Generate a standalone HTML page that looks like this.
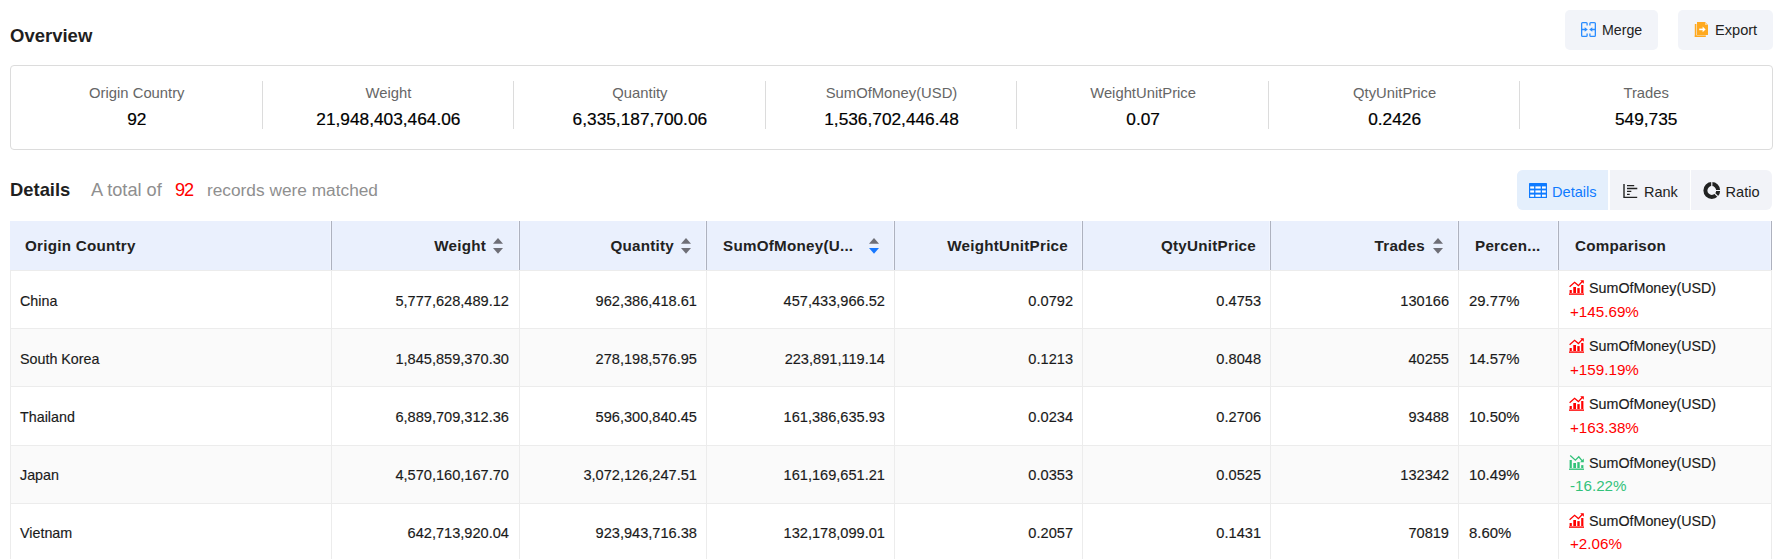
<!DOCTYPE html>
<html><head><meta charset="utf-8"><style>
html,body{margin:0;padding:0;background:#fff;}
body{width:1779px;height:559px;position:relative;overflow:hidden;font-family:"Liberation Sans",sans-serif;}
.t{position:absolute;white-space:nowrap;}
.r{position:absolute;box-sizing:content-box;}
</style></head><body>
<div class="t" style="top:25px;font-size:18.5px;line-height:21px;color:#1f1f1f;font-weight:700;left:10px;">Overview</div>
<div class="r" style="left:1565px;top:10px;width:93px;height:40px;background:#f2f4f9;border-radius:5px;"></div>
<div class="r" style="left:1678px;top:10px;width:95px;height:40px;background:#f2f4f9;border-radius:5px;"></div>
<svg class="r" style="left:1581px;top:22px" width="15" height="15" viewBox="0 0 15 15" fill="none" stroke="#2a8cff" stroke-width="1.3">
<path d="M6.1 3.6V1.6Q6.1 0.65 5.15 0.65H1.6Q0.65 0.65 0.65 1.6V13.4Q0.65 14.35 1.6 14.35H5.15Q6.1 14.35 6.1 13.4V11.4"/>
<path d="M8.9 3.6V1.6Q8.9 0.65 9.85 0.65H13.4Q14.35 0.65 14.35 1.6V13.4Q14.35 14.35 13.4 14.35H9.85Q8.9 14.35 8.9 13.4V11.4"/>
<path d="M0.65 7.5H4.5M14.35 7.5H10.5"/>
<path d="M3.7 5.2L6.8 7.5L3.7 9.8Z M11.3 5.2L8.2 7.5L11.3 9.8Z" fill="#2a8cff" stroke="none"/>
</svg>
<div class="t" style="top:22px;font-size:14.2px;line-height:16px;color:#222;font-weight:400;left:1602px;">Merge</div>
<svg class="r" style="left:1694px;top:21px" width="15" height="17" viewBox="0 0 15 17">
<rect x="0.8" y="3" width="1.6" height="13" fill="#ffa91f"/>
<rect x="0.8" y="14.4" width="11" height="1.6" fill="#ffa91f"/>
<path d="M3 1H11L14 4V14H3Z" fill="#ffa91f"/>
<path d="M11 1V4H14Z" fill="#ffd08a"/>
<rect x="5.2" y="7.6" width="4.5" height="1.6" fill="#fff"/>
<path d="M8.6 5.6L11.6 8.4L8.6 11.2Z" fill="#fff"/>
</svg>
<div class="t" style="top:22px;font-size:14.6px;line-height:16px;color:#222;font-weight:400;left:1715px;">Export</div>
<div class="r" style="left:10px;top:65px;width:1761px;height:83px;border:1px solid #dcdcdc;border-radius:4px;"></div>
<div class="t" style="top:85px;font-size:14.8px;line-height:16px;color:#666;font-weight:400;left:-163.2px;width:600px;text-align:center;">Origin Country</div>
<div class="t" style="top:109px;font-size:17.3px;line-height:20px;color:#000;font-weight:400;left:-163.2px;width:600px;text-align:center;-webkit-text-stroke:0.2px #000;">92</div>
<div class="r" style="left:262px;top:81px;width:1px;height:48px;background:#dcdcdc;"></div>
<div class="t" style="top:85px;font-size:14.8px;line-height:16px;color:#666;font-weight:400;left:88.39999999999998px;width:600px;text-align:center;">Weight</div>
<div class="t" style="top:109px;font-size:17.3px;line-height:20px;color:#000;font-weight:400;left:88.39999999999998px;width:600px;text-align:center;-webkit-text-stroke:0.2px #000;">21,948,403,464.06</div>
<div class="r" style="left:513px;top:81px;width:1px;height:48px;background:#dcdcdc;"></div>
<div class="t" style="top:85px;font-size:14.8px;line-height:16px;color:#666;font-weight:400;left:339.9px;width:600px;text-align:center;">Quantity</div>
<div class="t" style="top:109px;font-size:17.3px;line-height:20px;color:#000;font-weight:400;left:339.9px;width:600px;text-align:center;-webkit-text-stroke:0.2px #000;">6,335,187,700.06</div>
<div class="r" style="left:765px;top:81px;width:1px;height:48px;background:#dcdcdc;"></div>
<div class="t" style="top:85px;font-size:14.8px;line-height:16px;color:#666;font-weight:400;left:591.5px;width:600px;text-align:center;">SumOfMoney(USD)</div>
<div class="t" style="top:109px;font-size:17.3px;line-height:20px;color:#000;font-weight:400;left:591.5px;width:600px;text-align:center;-webkit-text-stroke:0.2px #000;">1,536,702,446.48</div>
<div class="r" style="left:1016px;top:81px;width:1px;height:48px;background:#dcdcdc;"></div>
<div class="t" style="top:85px;font-size:14.8px;line-height:16px;color:#666;font-weight:400;left:843.0999999999999px;width:600px;text-align:center;">WeightUnitPrice</div>
<div class="t" style="top:109px;font-size:17.3px;line-height:20px;color:#000;font-weight:400;left:843.0999999999999px;width:600px;text-align:center;-webkit-text-stroke:0.2px #000;">0.07</div>
<div class="r" style="left:1268px;top:81px;width:1px;height:48px;background:#dcdcdc;"></div>
<div class="t" style="top:85px;font-size:14.8px;line-height:16px;color:#666;font-weight:400;left:1094.6px;width:600px;text-align:center;">QtyUnitPrice</div>
<div class="t" style="top:109px;font-size:17.3px;line-height:20px;color:#000;font-weight:400;left:1094.6px;width:600px;text-align:center;-webkit-text-stroke:0.2px #000;">0.2426</div>
<div class="r" style="left:1519px;top:81px;width:1px;height:48px;background:#dcdcdc;"></div>
<div class="t" style="top:85px;font-size:14.8px;line-height:16px;color:#666;font-weight:400;left:1346.2px;width:600px;text-align:center;">Trades</div>
<div class="t" style="top:109px;font-size:17.3px;line-height:20px;color:#000;font-weight:400;left:1346.2px;width:600px;text-align:center;-webkit-text-stroke:0.2px #000;">549,735</div>
<div class="t" style="top:179px;font-size:18.4px;line-height:21px;color:#1f1f1f;font-weight:700;left:10px;">Details</div>
<div class="t" style="top:180px;font-size:18.2px;line-height:20px;color:#8f8f8f;font-weight:400;left:91px;">A total of</div>
<div class="t" style="top:180px;font-size:18.2px;line-height:20px;color:#f00;font-weight:400;letter-spacing:-1px;left:175px;">92</div>
<div class="t" style="top:180px;font-size:17.3px;line-height:20px;color:#8f8f8f;font-weight:400;left:207px;">records were matched</div>
<div class="r" style="left:1517px;top:170px;width:255px;height:40px;background:#f2f3f8;border-radius:6px;"></div>
<div class="r" style="left:1517px;top:170px;width:91px;height:40px;background:#e4effc;border-radius:6px 0 0 6px;"></div>
<div class="r" style="left:1608px;top:170px;width:2px;height:40px;background:#ffffff;"></div>
<div class="r" style="left:1690px;top:170px;width:1px;height:40px;background:#ffffff;"></div>
<svg class="r" style="left:1529px;top:183px" width="18" height="15" viewBox="0 0 18 15">
<rect x="0" y="0" width="18" height="15" rx="0.6" fill="#0f7bff"/>
<g fill="#fff">
<rect x="1.2" y="3.4" width="3.9" height="2.2"/><rect x="6.4" y="3.4" width="5.3" height="2.2"/><rect x="13" y="3.4" width="3.8" height="2.2"/>
<rect x="1.2" y="7.4" width="3.9" height="2.2"/><rect x="6.4" y="7.4" width="5.3" height="2.2"/><rect x="13" y="7.4" width="3.8" height="2.2"/>
<rect x="1.2" y="11.6" width="3.9" height="2.2"/><rect x="6.4" y="11.6" width="5.3" height="2.2"/><rect x="13" y="11.6" width="3.8" height="2.2"/>
</g></svg>
<div class="t" style="top:184px;font-size:14.6px;line-height:16px;color:#0f7bff;font-weight:400;left:1552px;">Details</div>
<svg class="r" style="left:1623px;top:184px" width="15" height="15" viewBox="0 0 15 15" fill="none" stroke="#222" stroke-width="1.4">
<path d="M1 0V13.4H14.2"/>
<path d="M4 1.6H11.2M4 4.5H14.3M4 7.4H8.3M4 10.4H6.7" stroke-width="1.3"/>
</svg>
<div class="t" style="top:184px;font-size:14.5px;line-height:16px;color:#222;font-weight:400;left:1644px;">Rank</div>
<svg class="r" style="left:1702px;top:181px" width="19" height="19" viewBox="0 0 19 19">
<circle cx="9.8" cy="9.5" r="6.4" fill="none" stroke="#222" stroke-width="4"/>
<path d="M9.8 9.5V0M9.8 9.5H19M9.8 9.5L17 16.7" stroke="#f2f3f8" stroke-width="1.2"/>
</svg>
<div class="t" style="top:184px;font-size:14.6px;line-height:16px;color:#222;font-weight:400;left:1725.5px;">Ratio</div>
<div class="r" style="left:10px;top:221px;width:1762px;height:49px;background:#eaf0fd;"></div>
<div class="r" style="left:330px;top:221px;width:1px;height:49px;background:#f1f5ff;"></div>
<div class="r" style="left:331px;top:221px;width:1px;height:49px;background:#aeb2bf;"></div>
<div class="r" style="left:518px;top:221px;width:1px;height:49px;background:#f1f5ff;"></div>
<div class="r" style="left:519px;top:221px;width:1px;height:49px;background:#aeb2bf;"></div>
<div class="r" style="left:705px;top:221px;width:1px;height:49px;background:#f1f5ff;"></div>
<div class="r" style="left:706px;top:221px;width:1px;height:49px;background:#aeb2bf;"></div>
<div class="r" style="left:893px;top:221px;width:1px;height:49px;background:#f1f5ff;"></div>
<div class="r" style="left:894px;top:221px;width:1px;height:49px;background:#aeb2bf;"></div>
<div class="r" style="left:1081px;top:221px;width:1px;height:49px;background:#f1f5ff;"></div>
<div class="r" style="left:1082px;top:221px;width:1px;height:49px;background:#aeb2bf;"></div>
<div class="r" style="left:1269px;top:221px;width:1px;height:49px;background:#f1f5ff;"></div>
<div class="r" style="left:1270px;top:221px;width:1px;height:49px;background:#aeb2bf;"></div>
<div class="r" style="left:1457px;top:221px;width:1px;height:49px;background:#f1f5ff;"></div>
<div class="r" style="left:1458px;top:221px;width:1px;height:49px;background:#aeb2bf;"></div>
<div class="r" style="left:1557px;top:221px;width:1px;height:49px;background:#f1f5ff;"></div>
<div class="r" style="left:1558px;top:221px;width:1px;height:49px;background:#aeb2bf;"></div>
<div class="r" style="left:1770px;top:221px;width:1px;height:49px;background:#f1f5ff;"></div>
<div class="r" style="left:1771px;top:221px;width:1px;height:49px;background:#aeb2bf;"></div>
<div class="t" style="top:237px;font-size:15.2px;line-height:17px;color:#222;font-weight:700;letter-spacing:0.25px;left:25px;">Origin Country</div>
<div class="t" style="top:237px;font-size:15.2px;line-height:17px;color:#222;font-weight:700;letter-spacing:0.25px;right:1293px;">Weight</div>
<svg class="r" style="left:493px;top:238px" width="10" height="16" viewBox="0 0 10 16">
<path d="M5 0L10 5.7H0Z" fill="#6e6e76"/><path d="M5 15.7L10 10H0Z" fill="#6e6e76"/></svg>
<div class="t" style="top:237px;font-size:15.2px;line-height:17px;color:#222;font-weight:700;letter-spacing:0.25px;right:1105px;">Quantity</div>
<svg class="r" style="left:681px;top:238px" width="10" height="16" viewBox="0 0 10 16">
<path d="M5 0L10 5.7H0Z" fill="#6e6e76"/><path d="M5 15.7L10 10H0Z" fill="#6e6e76"/></svg>
<div class="t" style="top:237px;font-size:15.2px;line-height:17px;color:#222;font-weight:700;letter-spacing:0.25px;left:723px;">SumOfMoney(U...</div>
<svg class="r" style="left:869px;top:238px" width="10" height="16" viewBox="0 0 10 16">
<path d="M5 0L10 5.7H0Z" fill="#6e6e76"/><path d="M5 15.7L10 10H0Z" fill="#1677ff"/></svg>
<div class="t" style="top:237px;font-size:15.2px;line-height:17px;color:#222;font-weight:700;letter-spacing:0.25px;right:711px;">WeightUnitPrice</div>
<div class="t" style="top:237px;font-size:15.2px;line-height:17px;color:#222;font-weight:700;letter-spacing:0.25px;right:523px;">QtyUnitPrice</div>
<div class="t" style="top:237px;font-size:15.2px;line-height:17px;color:#222;font-weight:700;letter-spacing:0.25px;right:354px;">Trades</div>
<svg class="r" style="left:1433px;top:238px" width="10" height="16" viewBox="0 0 10 16">
<path d="M5 0L10 5.7H0Z" fill="#6e6e76"/><path d="M5 15.7L10 10H0Z" fill="#6e6e76"/></svg>
<div class="t" style="top:237px;font-size:15.2px;line-height:17px;color:#222;font-weight:700;letter-spacing:0.25px;left:1475px;">Percen...</div>
<div class="t" style="top:237px;font-size:15.2px;line-height:17px;color:#222;font-weight:700;letter-spacing:0.25px;left:1575px;">Comparison</div>
<div class="r" style="left:10px;top:271px;width:1762px;height:57px;background:#ffffff;"></div>
<div class="r" style="left:10px;top:329px;width:1762px;height:57px;background:#fafafa;"></div>
<div class="r" style="left:10px;top:387px;width:1762px;height:58px;background:#ffffff;"></div>
<div class="r" style="left:10px;top:446px;width:1762px;height:57px;background:#fafafa;"></div>
<div class="r" style="left:10px;top:504px;width:1762px;height:57px;background:#ffffff;"></div>
<div class="r" style="left:10px;top:270px;width:1762px;height:1px;background:#ececec;"></div>
<div class="r" style="left:10px;top:270px;width:1px;height:59px;background:#ececec;"></div>
<div class="r" style="left:331px;top:270px;width:1px;height:59px;background:#ececec;"></div>
<div class="r" style="left:519px;top:270px;width:1px;height:59px;background:#ececec;"></div>
<div class="r" style="left:706px;top:270px;width:1px;height:59px;background:#ececec;"></div>
<div class="r" style="left:894px;top:270px;width:1px;height:59px;background:#ececec;"></div>
<div class="r" style="left:1082px;top:270px;width:1px;height:59px;background:#ececec;"></div>
<div class="r" style="left:1270px;top:270px;width:1px;height:59px;background:#ececec;"></div>
<div class="r" style="left:1458px;top:270px;width:1px;height:59px;background:#ececec;"></div>
<div class="r" style="left:1558px;top:270px;width:1px;height:59px;background:#ececec;"></div>
<div class="r" style="left:1771px;top:270px;width:1px;height:59px;background:#ececec;"></div>
<div class="r" style="left:10px;top:328px;width:1762px;height:1px;background:#ececec;"></div>
<div class="r" style="left:10px;top:328px;width:1px;height:59px;background:#ececec;"></div>
<div class="r" style="left:331px;top:328px;width:1px;height:59px;background:#ececec;"></div>
<div class="r" style="left:519px;top:328px;width:1px;height:59px;background:#ececec;"></div>
<div class="r" style="left:706px;top:328px;width:1px;height:59px;background:#ececec;"></div>
<div class="r" style="left:894px;top:328px;width:1px;height:59px;background:#ececec;"></div>
<div class="r" style="left:1082px;top:328px;width:1px;height:59px;background:#ececec;"></div>
<div class="r" style="left:1270px;top:328px;width:1px;height:59px;background:#ececec;"></div>
<div class="r" style="left:1458px;top:328px;width:1px;height:59px;background:#ececec;"></div>
<div class="r" style="left:1558px;top:328px;width:1px;height:59px;background:#ececec;"></div>
<div class="r" style="left:1771px;top:328px;width:1px;height:59px;background:#ececec;"></div>
<div class="r" style="left:10px;top:386px;width:1762px;height:1px;background:#ececec;"></div>
<div class="r" style="left:10px;top:386px;width:1px;height:60px;background:#ececec;"></div>
<div class="r" style="left:331px;top:386px;width:1px;height:60px;background:#ececec;"></div>
<div class="r" style="left:519px;top:386px;width:1px;height:60px;background:#ececec;"></div>
<div class="r" style="left:706px;top:386px;width:1px;height:60px;background:#ececec;"></div>
<div class="r" style="left:894px;top:386px;width:1px;height:60px;background:#ececec;"></div>
<div class="r" style="left:1082px;top:386px;width:1px;height:60px;background:#ececec;"></div>
<div class="r" style="left:1270px;top:386px;width:1px;height:60px;background:#ececec;"></div>
<div class="r" style="left:1458px;top:386px;width:1px;height:60px;background:#ececec;"></div>
<div class="r" style="left:1558px;top:386px;width:1px;height:60px;background:#ececec;"></div>
<div class="r" style="left:1771px;top:386px;width:1px;height:60px;background:#ececec;"></div>
<div class="r" style="left:10px;top:445px;width:1762px;height:1px;background:#ececec;"></div>
<div class="r" style="left:10px;top:445px;width:1px;height:59px;background:#ececec;"></div>
<div class="r" style="left:331px;top:445px;width:1px;height:59px;background:#ececec;"></div>
<div class="r" style="left:519px;top:445px;width:1px;height:59px;background:#ececec;"></div>
<div class="r" style="left:706px;top:445px;width:1px;height:59px;background:#ececec;"></div>
<div class="r" style="left:894px;top:445px;width:1px;height:59px;background:#ececec;"></div>
<div class="r" style="left:1082px;top:445px;width:1px;height:59px;background:#ececec;"></div>
<div class="r" style="left:1270px;top:445px;width:1px;height:59px;background:#ececec;"></div>
<div class="r" style="left:1458px;top:445px;width:1px;height:59px;background:#ececec;"></div>
<div class="r" style="left:1558px;top:445px;width:1px;height:59px;background:#ececec;"></div>
<div class="r" style="left:1771px;top:445px;width:1px;height:59px;background:#ececec;"></div>
<div class="r" style="left:10px;top:503px;width:1762px;height:1px;background:#ececec;"></div>
<div class="r" style="left:10px;top:503px;width:1px;height:59px;background:#ececec;"></div>
<div class="r" style="left:331px;top:503px;width:1px;height:59px;background:#ececec;"></div>
<div class="r" style="left:519px;top:503px;width:1px;height:59px;background:#ececec;"></div>
<div class="r" style="left:706px;top:503px;width:1px;height:59px;background:#ececec;"></div>
<div class="r" style="left:894px;top:503px;width:1px;height:59px;background:#ececec;"></div>
<div class="r" style="left:1082px;top:503px;width:1px;height:59px;background:#ececec;"></div>
<div class="r" style="left:1270px;top:503px;width:1px;height:59px;background:#ececec;"></div>
<div class="r" style="left:1458px;top:503px;width:1px;height:59px;background:#ececec;"></div>
<div class="r" style="left:1558px;top:503px;width:1px;height:59px;background:#ececec;"></div>
<div class="r" style="left:1771px;top:503px;width:1px;height:59px;background:#ececec;"></div>
<div class="t" style="top:293px;font-size:14.3px;line-height:16px;color:#1a1a1a;font-weight:400;left:20px;-webkit-text-stroke:0.15px #1a1a1a;">China</div>
<div class="t" style="top:293px;font-size:14.6px;line-height:16px;color:#1a1a1a;font-weight:400;right:1270px;-webkit-text-stroke:0.15px #1a1a1a;">5,777,628,489.12</div>
<div class="t" style="top:293px;font-size:14.6px;line-height:16px;color:#1a1a1a;font-weight:400;right:1082px;-webkit-text-stroke:0.15px #1a1a1a;">962,386,418.61</div>
<div class="t" style="top:293px;font-size:14.6px;line-height:16px;color:#1a1a1a;font-weight:400;right:894px;-webkit-text-stroke:0.15px #1a1a1a;">457,433,966.52</div>
<div class="t" style="top:293px;font-size:14.6px;line-height:16px;color:#1a1a1a;font-weight:400;right:706px;-webkit-text-stroke:0.15px #1a1a1a;">0.0792</div>
<div class="t" style="top:293px;font-size:14.6px;line-height:16px;color:#1a1a1a;font-weight:400;right:518px;-webkit-text-stroke:0.15px #1a1a1a;">0.4753</div>
<div class="t" style="top:293px;font-size:14.6px;line-height:16px;color:#1a1a1a;font-weight:400;right:330px;-webkit-text-stroke:0.15px #1a1a1a;">130166</div>
<div class="t" style="top:293px;font-size:14.9px;line-height:16px;color:#1a1a1a;font-weight:400;left:1469px;-webkit-text-stroke:0.15px #1a1a1a;">29.77%</div>
<svg class="r" style="left:1569px;top:280px" width="15" height="15" viewBox="0 0 15 15" fill="#ff0000">
<rect x="0" y="13.4" width="15" height="1.4"/>
<rect x="0.6" y="10" width="2.2" height="3"/><rect x="4.3" y="7" width="2.7" height="6"/><rect x="8.3" y="8.1" width="2.4" height="4.9"/><rect x="12.2" y="5" width="2.2" height="8"/>
<path d="M0.6 6.8L5.6 2.3L9.4 5.6L13.2 1.5" fill="none" stroke="#ff0000" stroke-width="1.3"/>
<path d="M11.2 0.2H14.8V3.8Z"/>
</svg>
<div class="t" style="top:280px;font-size:14.3px;line-height:16px;color:#1a1a1a;font-weight:400;left:1589px;-webkit-text-stroke:0.15px #1a1a1a;">SumOfMoney(USD)</div>
<div class="t" style="top:303px;font-size:15.2px;line-height:17px;color:#ff0000;font-weight:400;left:1570px;">+145.69%</div>
<div class="t" style="top:351px;font-size:14.3px;line-height:16px;color:#1a1a1a;font-weight:400;left:20px;-webkit-text-stroke:0.15px #1a1a1a;">South Korea</div>
<div class="t" style="top:351px;font-size:14.6px;line-height:16px;color:#1a1a1a;font-weight:400;right:1270px;-webkit-text-stroke:0.15px #1a1a1a;">1,845,859,370.30</div>
<div class="t" style="top:351px;font-size:14.6px;line-height:16px;color:#1a1a1a;font-weight:400;right:1082px;-webkit-text-stroke:0.15px #1a1a1a;">278,198,576.95</div>
<div class="t" style="top:351px;font-size:14.6px;line-height:16px;color:#1a1a1a;font-weight:400;right:894px;-webkit-text-stroke:0.15px #1a1a1a;">223,891,119.14</div>
<div class="t" style="top:351px;font-size:14.6px;line-height:16px;color:#1a1a1a;font-weight:400;right:706px;-webkit-text-stroke:0.15px #1a1a1a;">0.1213</div>
<div class="t" style="top:351px;font-size:14.6px;line-height:16px;color:#1a1a1a;font-weight:400;right:518px;-webkit-text-stroke:0.15px #1a1a1a;">0.8048</div>
<div class="t" style="top:351px;font-size:14.6px;line-height:16px;color:#1a1a1a;font-weight:400;right:330px;-webkit-text-stroke:0.15px #1a1a1a;">40255</div>
<div class="t" style="top:351px;font-size:14.9px;line-height:16px;color:#1a1a1a;font-weight:400;left:1469px;-webkit-text-stroke:0.15px #1a1a1a;">14.57%</div>
<svg class="r" style="left:1569px;top:338px" width="15" height="15" viewBox="0 0 15 15" fill="#ff0000">
<rect x="0" y="13.4" width="15" height="1.4"/>
<rect x="0.6" y="10" width="2.2" height="3"/><rect x="4.3" y="7" width="2.7" height="6"/><rect x="8.3" y="8.1" width="2.4" height="4.9"/><rect x="12.2" y="5" width="2.2" height="8"/>
<path d="M0.6 6.8L5.6 2.3L9.4 5.6L13.2 1.5" fill="none" stroke="#ff0000" stroke-width="1.3"/>
<path d="M11.2 0.2H14.8V3.8Z"/>
</svg>
<div class="t" style="top:338px;font-size:14.3px;line-height:16px;color:#1a1a1a;font-weight:400;left:1589px;-webkit-text-stroke:0.15px #1a1a1a;">SumOfMoney(USD)</div>
<div class="t" style="top:361px;font-size:15.2px;line-height:17px;color:#ff0000;font-weight:400;left:1570px;">+159.19%</div>
<div class="t" style="top:409px;font-size:14.3px;line-height:16px;color:#1a1a1a;font-weight:400;left:20px;-webkit-text-stroke:0.15px #1a1a1a;">Thailand</div>
<div class="t" style="top:409px;font-size:14.6px;line-height:16px;color:#1a1a1a;font-weight:400;right:1270px;-webkit-text-stroke:0.15px #1a1a1a;">6,889,709,312.36</div>
<div class="t" style="top:409px;font-size:14.6px;line-height:16px;color:#1a1a1a;font-weight:400;right:1082px;-webkit-text-stroke:0.15px #1a1a1a;">596,300,840.45</div>
<div class="t" style="top:409px;font-size:14.6px;line-height:16px;color:#1a1a1a;font-weight:400;right:894px;-webkit-text-stroke:0.15px #1a1a1a;">161,386,635.93</div>
<div class="t" style="top:409px;font-size:14.6px;line-height:16px;color:#1a1a1a;font-weight:400;right:706px;-webkit-text-stroke:0.15px #1a1a1a;">0.0234</div>
<div class="t" style="top:409px;font-size:14.6px;line-height:16px;color:#1a1a1a;font-weight:400;right:518px;-webkit-text-stroke:0.15px #1a1a1a;">0.2706</div>
<div class="t" style="top:409px;font-size:14.6px;line-height:16px;color:#1a1a1a;font-weight:400;right:330px;-webkit-text-stroke:0.15px #1a1a1a;">93488</div>
<div class="t" style="top:409px;font-size:14.9px;line-height:16px;color:#1a1a1a;font-weight:400;left:1469px;-webkit-text-stroke:0.15px #1a1a1a;">10.50%</div>
<svg class="r" style="left:1569px;top:396px" width="15" height="15" viewBox="0 0 15 15" fill="#ff0000">
<rect x="0" y="13.4" width="15" height="1.4"/>
<rect x="0.6" y="10" width="2.2" height="3"/><rect x="4.3" y="7" width="2.7" height="6"/><rect x="8.3" y="8.1" width="2.4" height="4.9"/><rect x="12.2" y="5" width="2.2" height="8"/>
<path d="M0.6 6.8L5.6 2.3L9.4 5.6L13.2 1.5" fill="none" stroke="#ff0000" stroke-width="1.3"/>
<path d="M11.2 0.2H14.8V3.8Z"/>
</svg>
<div class="t" style="top:396px;font-size:14.3px;line-height:16px;color:#1a1a1a;font-weight:400;left:1589px;-webkit-text-stroke:0.15px #1a1a1a;">SumOfMoney(USD)</div>
<div class="t" style="top:419px;font-size:15.2px;line-height:17px;color:#ff0000;font-weight:400;left:1570px;">+163.38%</div>
<div class="t" style="top:467px;font-size:14.3px;line-height:16px;color:#1a1a1a;font-weight:400;left:20px;-webkit-text-stroke:0.15px #1a1a1a;">Japan</div>
<div class="t" style="top:467px;font-size:14.6px;line-height:16px;color:#1a1a1a;font-weight:400;right:1270px;-webkit-text-stroke:0.15px #1a1a1a;">4,570,160,167.70</div>
<div class="t" style="top:467px;font-size:14.6px;line-height:16px;color:#1a1a1a;font-weight:400;right:1082px;-webkit-text-stroke:0.15px #1a1a1a;">3,072,126,247.51</div>
<div class="t" style="top:467px;font-size:14.6px;line-height:16px;color:#1a1a1a;font-weight:400;right:894px;-webkit-text-stroke:0.15px #1a1a1a;">161,169,651.21</div>
<div class="t" style="top:467px;font-size:14.6px;line-height:16px;color:#1a1a1a;font-weight:400;right:706px;-webkit-text-stroke:0.15px #1a1a1a;">0.0353</div>
<div class="t" style="top:467px;font-size:14.6px;line-height:16px;color:#1a1a1a;font-weight:400;right:518px;-webkit-text-stroke:0.15px #1a1a1a;">0.0525</div>
<div class="t" style="top:467px;font-size:14.6px;line-height:16px;color:#1a1a1a;font-weight:400;right:330px;-webkit-text-stroke:0.15px #1a1a1a;">132342</div>
<div class="t" style="top:467px;font-size:14.9px;line-height:16px;color:#1a1a1a;font-weight:400;left:1469px;-webkit-text-stroke:0.15px #1a1a1a;">10.49%</div>
<svg class="r" style="left:1569px;top:455px" width="15" height="15" viewBox="0 0 15 15" fill="#33c27a">
<rect x="0" y="13.5" width="15" height="1.4"/>
<rect x="0.6" y="5" width="2.2" height="8"/><rect x="4.3" y="8" width="2.7" height="5"/><rect x="8.3" y="7.1" width="2.4" height="5.9"/><rect x="12.2" y="10.1" width="2.2" height="2.9"/>
<path d="M1.2 0.5L6.4 5.2L9.8 1.8L13.2 5.8" fill="none" stroke="#33c27a" stroke-width="1.3"/>
<path d="M14.8 3.6V7.3H11.1Z"/>
</svg>
<div class="t" style="top:455px;font-size:14.3px;line-height:16px;color:#1a1a1a;font-weight:400;left:1589px;-webkit-text-stroke:0.15px #1a1a1a;">SumOfMoney(USD)</div>
<div class="t" style="top:477px;font-size:15.2px;line-height:17px;color:#33c27a;font-weight:400;left:1570px;">-16.22%</div>
<div class="t" style="top:525px;font-size:14.3px;line-height:16px;color:#1a1a1a;font-weight:400;left:20px;-webkit-text-stroke:0.15px #1a1a1a;">Vietnam</div>
<div class="t" style="top:525px;font-size:14.6px;line-height:16px;color:#1a1a1a;font-weight:400;right:1270px;-webkit-text-stroke:0.15px #1a1a1a;">642,713,920.04</div>
<div class="t" style="top:525px;font-size:14.6px;line-height:16px;color:#1a1a1a;font-weight:400;right:1082px;-webkit-text-stroke:0.15px #1a1a1a;">923,943,716.38</div>
<div class="t" style="top:525px;font-size:14.6px;line-height:16px;color:#1a1a1a;font-weight:400;right:894px;-webkit-text-stroke:0.15px #1a1a1a;">132,178,099.01</div>
<div class="t" style="top:525px;font-size:14.6px;line-height:16px;color:#1a1a1a;font-weight:400;right:706px;-webkit-text-stroke:0.15px #1a1a1a;">0.2057</div>
<div class="t" style="top:525px;font-size:14.6px;line-height:16px;color:#1a1a1a;font-weight:400;right:518px;-webkit-text-stroke:0.15px #1a1a1a;">0.1431</div>
<div class="t" style="top:525px;font-size:14.6px;line-height:16px;color:#1a1a1a;font-weight:400;right:330px;-webkit-text-stroke:0.15px #1a1a1a;">70819</div>
<div class="t" style="top:525px;font-size:14.9px;line-height:16px;color:#1a1a1a;font-weight:400;left:1469px;-webkit-text-stroke:0.15px #1a1a1a;">8.60%</div>
<svg class="r" style="left:1569px;top:513px" width="15" height="15" viewBox="0 0 15 15" fill="#ff0000">
<rect x="0" y="13.4" width="15" height="1.4"/>
<rect x="0.6" y="10" width="2.2" height="3"/><rect x="4.3" y="7" width="2.7" height="6"/><rect x="8.3" y="8.1" width="2.4" height="4.9"/><rect x="12.2" y="5" width="2.2" height="8"/>
<path d="M0.6 6.8L5.6 2.3L9.4 5.6L13.2 1.5" fill="none" stroke="#ff0000" stroke-width="1.3"/>
<path d="M11.2 0.2H14.8V3.8Z"/>
</svg>
<div class="t" style="top:513px;font-size:14.3px;line-height:16px;color:#1a1a1a;font-weight:400;left:1589px;-webkit-text-stroke:0.15px #1a1a1a;">SumOfMoney(USD)</div>
<div class="t" style="top:535px;font-size:15.2px;line-height:17px;color:#ff0000;font-weight:400;left:1570px;">+2.06%</div>
</body></html>
